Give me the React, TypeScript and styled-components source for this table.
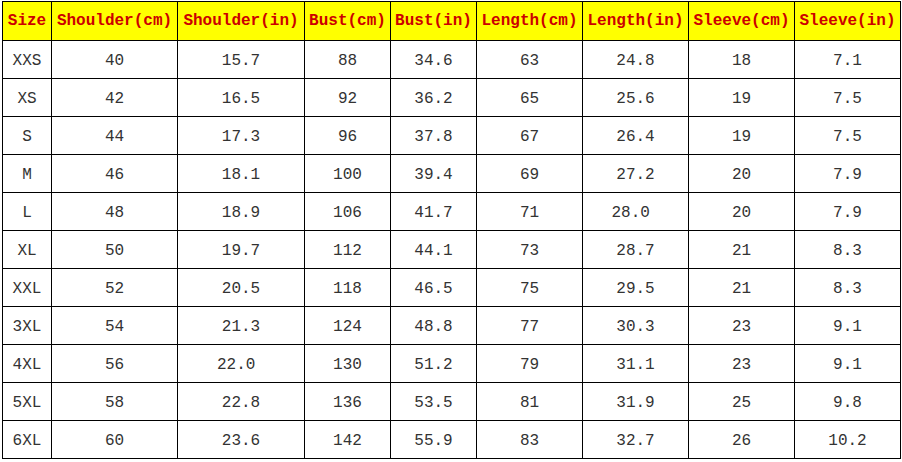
import { FC } from "react";
import styled, { createGlobalStyle } from "styled-components";

const GlobalStyle = createGlobalStyle`
  body {
    margin: 0;
    padding: 1px 0 0 2px;
    background: #ffffff;
    font-family: "Liberation Mono", "DejaVu Sans Mono", monospace;
  }
`;

const headers = [
  "Size",
  "Shoulder(cm)",
  "Shoulder(in)",
  "Bust(cm)",
  "Bust(in)",
  "Length(cm)",
  "Length(in)",
  "Sleeve(cm)",
  "Sleeve(in)",
];

const widths = [49, 126, 127, 86, 86, 106, 106, 106, 106];

// trailing nbsp reproduces the slightly off-centre cells of the original sheet
const rows: string[][] = [
  ["XXS", "40", "15.7", "88", "34.6", "63", "24.8", "18", "7.1"],
  ["XS", "42", "16.5", "92", "36.2", "65", "25.6", "19", "7.5"],
  ["S", "44", "17.3", "96", "37.8", "67", "26.4", "19", "7.5"],
  ["M", "46", "18.1", "100", "39.4", "69", "27.2", "20", "7.9"],
  ["L", "48", "18.9", "106", "41.7", "71", "28.0\u00a0", "20", "7.9"],
  ["XL", "50", "19.7", "112", "44.1", "73", "28.7", "21", "8.3"],
  ["XXL", "52", "20.5", "118", "46.5", "75", "29.5", "21", "8.3"],
  ["3XL", "54", "21.3", "124", "48.8", "77", "30.3", "23", "9.1"],
  ["4XL", "56", "22.0\u00a0", "130", "51.2", "79", "31.1", "23", "9.1"],
  ["5XL", "58", "22.8", "136", "53.5", "81", "31.9", "25", "9.8"],
  ["6XL", "60", "23.6", "142", "55.9", "83", "32.7", "26", "10.2"],
];

const App: FC = () => (
  <>
    <GlobalStyle />
    <SizeTable>
      <colgroup>
        {widths.map((w, i) => (
          <col key={i} style={{ width: w }} />
        ))}
      </colgroup>
      <thead>
        <HeadRow>
          {headers.map((h) => (
            <HeadCell key={h}>{h}</HeadCell>
          ))}
        </HeadRow>
      </thead>
      <tbody>
        {rows.map((r) => (
          <BodyRow key={r[0]}>
            {r.map((v, i) => (
              <Cell key={i}>{v}</Cell>
            ))}
          </BodyRow>
        ))}
      </tbody>
    </SizeTable>
  </>
);

export default App;

const SizeTable = styled.table`
  width: 898px;
  table-layout: fixed;
  border-collapse: collapse;
  border: 1px solid #000;
`;

const HeadRow = styled.tr`
  height: 39px;
  background: #ffff00;
`;

const BodyRow = styled.tr`
  height: 38px;
`;

const HeadCell = styled.th`
  border: 1px solid #000;
  padding: 0;
  font-size: 16px;
  font-weight: bold;
  color: #cc0000;
  white-space: nowrap;
  text-align: center;
`;

const Cell = styled.td`
  border: 1px solid #000;
  padding: 2px 0 0;
  font-size: 16px;
  color: #333;
  text-align: center;
  white-space: pre;
`;
